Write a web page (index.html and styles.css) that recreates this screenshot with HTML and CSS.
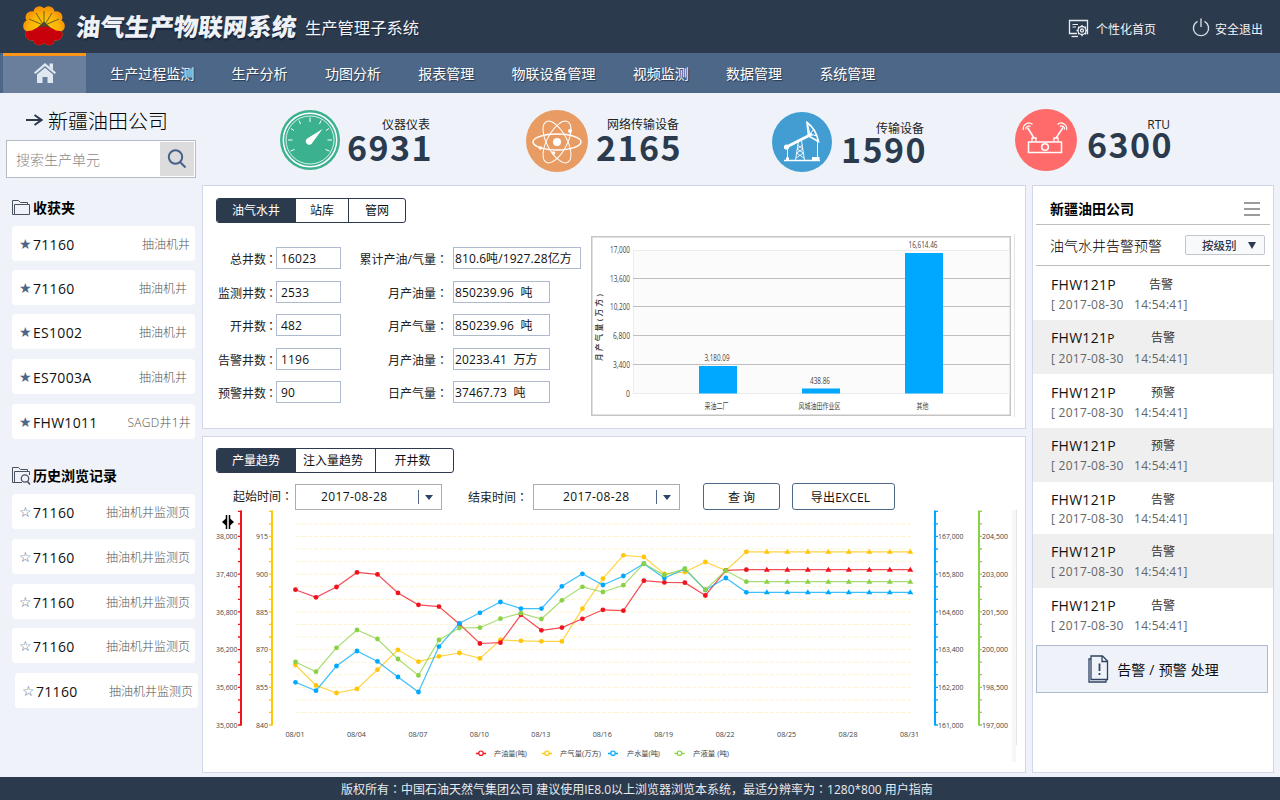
FILE: index.html
```html
<!DOCTYPE html>
<html lang="zh-CN">
  <head>
    <meta charset="UTF-8" />
    <meta name="viewport" content="width=device-width, initial-scale=1.0" />
    <title>油气生产物联网系统</title>
    <link rel="stylesheet" href="styles.css">
  </head>
  <body>
    <header class="header">
      <svg class="logo" width="42" height="40" viewBox="0 0 42 40">
        <defs>
          <radialGradient id="petal" cx="50%" cy="55%" r="60%">
            <stop offset="0" stop-color="#ffd200" />
            <stop offset="0.6" stop-color="#fbb009" />
            <stop offset="1" stop-color="#f08300" />
          </radialGradient>
          <clipPath id="flower">
            <circle cx="21" cy="20" r="15.5" />
            <circle cx="16.4" cy="6.2" r="6" /><circle cx="25.6" cy="6.2" r="6" />
            <circle cx="8.5" cy="11.2" r="6" /><circle cx="33.5" cy="11.2" r="6" />
            <circle cx="6.2" cy="20" r="6" /><circle cx="35.8" cy="20" r="6" />
            <circle cx="8.5" cy="28.5" r="6" /><circle cx="33.5" cy="28.5" r="6" />
            <circle cx="16.4" cy="33.2" r="6" /><circle cx="25.6" cy="33.2" r="6" />
          </clipPath>
        </defs>
        <g clip-path="url(#flower)">
          <rect width="42" height="40" fill="url(#petal)" />
          <path d="M21 19V5M20.500 19L13 7M21.500 19L29 7M20 19L6 13M22 19L36 13" stroke="#5e5a1c" stroke-width="0.9" />
          <path d="M14 22L21 15.500L28 22Z" fill="#4c4a28" />
          <path d="M0 26Q5 24.500 9 24.500Q15 20.500 21 20.500Q27 20.500 33 24.500Q37 24.500 42 26V40H0Z" fill="#c7000b" />
        </g>
      </svg>
      <h1>油气生产物联网系统</h1>
      <h2>生产管理子系统</h2>
      <div class="header-links">
        <a class="link-home">
          <svg width="21" height="19" viewBox="0 0 21 19" fill="none" stroke="#e8ecf1" stroke-width="1.300">
            <path d="M9 14.500H1.500V1.500H19.500V14.500H18.500" />
            <path d="M3.500 17.500H10" />
            <path d="M4.500 5.500H10M4.500 8H8" stroke-width="1" />
            <circle cx="14" cy="11.500" r="4" />
            <circle cx="14" cy="11.500" r="1.500" />
            <path d="M14 6V7.500M14 15.500V17.300M8.500 11.500H10M18 11.500H19.500M17.900 7.700L16.900 8.700M10.100 15.300L11.200 14.300M17.900 15.300L16.900 14.300M10.100 7.700L11.100 8.700" />
          </svg>
          个性化首页
        </a>
        <a class="link-exit">
          <svg width="18" height="19" viewBox="0 0 18 19" fill="none" stroke="#d5dae2" stroke-width="1.400">
            <path d="M5.500 3.300A7.600 7.600 0 1 0 12.500 3.300" />
            <path d="M9 0.500V9" />
          </svg>
          安全退出
        </a>
      </div>
    </header>

    <nav class="nav">
      <a class="nav-home">
        <svg width="22" height="20" viewBox="0 0 22 20" fill="#dfe8f1">
          <path d="M11 0L22 9.500L20.500 11L11 3L1.500 11L0 9.500Z" />
          <path d="M15.500 0.500H19V7L15.500 4Z" />
          <path d="M3 11.500L11 4.800L19 11.500V20H13.500V14H8.500V20H3Z" />
        </svg>
      </a>
      <a>生产过程监测</a>
      <a>生产分析</a>
      <a>功图分析</a>
      <a>报表管理</a>
      <a>物联设备管理</a>
      <a>视频监测</a>
      <a>数据管理</a>
      <a>系统管理</a>
    </nav>

    <div class="page">
      <aside class="sidebar">
        <div class="company">
          <svg width="17" height="12" viewBox="0 0 17 12" fill="none" stroke="#2c3a4d" stroke-width="2">
            <path d="M0 6H15.500M8.500 1L15.500 6L8.500 11" />
          </svg>
          新疆油田公司
        </div>
        <div class="search">
          <span>搜索生产单元</span>
          <button>
            <svg width="20" height="20" viewBox="0 0 20 20" fill="none" stroke="#46618a" stroke-width="2">
              <circle cx="8.500" cy="8" r="6.700" />
              <path d="M13 13L18.500 18.500" />
            </svg>
          </button>
        </div>

        <div class="side-title">
          <svg width="21" height="17" viewBox="0 0 21 17" fill="none" stroke="#4a5260" stroke-width="1">
            <path d="M2.500 15.500H0.500V1.500H6.500L8.500 3.500H15.500V5.500" />
            <path d="M2.500 15.500V5.500H17.500V15.500Z" />
          </svg>
          收获夹
        </div>
        <ul class="side-list favorites">
          <li><i class="star">★</i><b>71160</b><span>抽油机井</span></li>
          <li><i class="star">★</i><b>71160</b><span>抽油机井</span></li>
          <li><i class="star">★</i><b>ES1002</b><span>抽油机井</span></li>
          <li><i class="star">★</i><b>ES7003A</b><span>抽油机井</span></li>
          <li><i class="star">★</i><b>FHW1011</b><span>SAGD井1井</span></li>
        </ul>

        <div class="side-title history-title">
          <svg width="21" height="18" viewBox="0 0 21 18" fill="none" stroke="#4a5260" stroke-width="1">
            <path d="M10 15.500H0.500V0.500H6.500L8.500 2.500H15.500V4.500" />
            <path d="M2.500 15.500V4.500H17.500V8" />
            <circle cx="13" cy="11.500" r="3.700" stroke-width="1.300" />
            <path d="M15.500 14.500L18 17.500" stroke-width="1.500" />
          </svg>
          历史浏览记录
        </div>
        <ul class="side-list history">
          <li><i class="star">☆</i><b>71160</b><span>抽油机井监测页</span></li>
          <li><i class="star">☆</i><b>71160</b><span>抽油机井监测页</span></li>
          <li><i class="star">☆</i><b>71160</b><span>抽油机井监测页</span></li>
          <li><i class="star">☆</i><b>71160</b><span>抽油机井监测页</span></li>
          <li><i class="star">☆</i><b>71160</b><span>抽油机井监测页</span></li>
        </ul>
      </aside>

      <main class="main">
        <section class="stats">
          <div class="stat">
            <svg width="60" height="60" viewBox="0 0 60 60" fill="none" stroke="#fff">
              <circle cx="30" cy="30" r="30" fill="#3bb18f" stroke="none" />
              <circle cx="30" cy="30" r="26.700" stroke-width="1.500" />
              <circle cx="30" cy="30" r="24" stroke-width="0.800" />
              <path d="M30 7.500V12M19 10.500L20.500 14M41 10.500L39.500 14M11 18.500L14 20.500M49 18.500L46 20.500M8 30H12.500M52 30H47.500M10.500 41L14.500 39.500M49.500 41L45.500 39.500" />
              <path d="M42.500 19L32.500 32.500A3.500 3.500 0 1 1 28 28Z" fill="#fff" stroke="none" />
            </svg>
            <div class="stat-text"><span>仪器仪表</span><strong>6931</strong></div>
          </div>
          <div class="stat">
            <svg width="62" height="62" viewBox="0 0 62 62" fill="none" stroke="#fff">
              <circle cx="31" cy="31" r="31" fill="#e89b63" stroke="none" />
              <ellipse cx="31" cy="32" rx="24" ry="8" stroke-width="1.500" />
              <ellipse cx="31" cy="32" rx="23" ry="10" transform="rotate(62 31 32)" />
              <ellipse cx="31" cy="32" rx="23" ry="10" transform="rotate(118 31 32)" />
              <circle cx="31" cy="32" r="4" fill="#fff" stroke="none" />
              <circle cx="44" cy="21" r="2" fill="#fff" stroke="none" />
              <circle cx="14.500" cy="38" r="1.800" fill="#fff" stroke="none" />
              <circle cx="27.500" cy="43" r="1.800" fill="#fff" stroke="none" />
            </svg>
            <div class="stat-text"><span>网络传输设备</span><strong>2165</strong></div>
          </div>
          <div class="stat">
            <svg width="60" height="60" viewBox="0 0 60 60" fill="none" stroke="#fff">
              <circle cx="30" cy="30" r="30" fill="#419dd2" stroke="none" />
              <path d="M12 48.500H48" stroke-width="1.400" />
              <path d="M14.500 35L40 22" stroke-width="3" />
              <circle cx="14.500" cy="35" r="2.600" fill="#fff" stroke="none" />
              <path d="M35 10.500Q44 17 46.500 29.500L36.500 24Z" stroke-width="1.600" />
              <path d="M38 22L42 17M38 22L45 24M38 22L35.500 12" />
              <path d="M26.500 29L23.500 48M29.500 29L32.500 48M25.500 33L31 37L24.500 41L32 46M30.500 33L25 37L31.500 41L24 46" stroke-width="0.900" />
              <path d="M15.500 37V48M45.500 29V46" />
              <path d="M14 45.500H17V48.500H14ZM40 45H47.500V48.500H40Z" fill="#fff" stroke="none" />
            </svg>
            <div class="stat-text"><span>传输设备</span><strong>1590</strong></div>
          </div>
          <div class="stat">
            <svg width="62" height="62" viewBox="0 0 62 62" fill="none" stroke="#fff">
              <circle cx="31" cy="31" r="31" fill="#ff6b6b" stroke="none" />
              <rect x="13.500" y="33" width="33" height="10.500" stroke-width="1.500" />
              <circle cx="30" cy="38" r="3.300" stroke-width="1.600" />
              <path d="M17 32.500V29H21V32.500M39 32.500V29H43V32.500" stroke-width="1.300" />
              <path d="M19 29L12.500 18.500M41 29L48 18.500" stroke-width="1.500" />
              <path d="M8.500 21A5.500 5.500 0 0 1 17.500 15.500M10.800 20.500A3 3 0 0 1 15.500 17.500M51.500 21A5.500 5.500 0 0 0 42.500 15.500M49.500 20.500A3 3 0 0 0 44.800 17.500" stroke-width="1.200" />
            </svg>
            <div class="stat-text"><span>RTU</span><strong>6300</strong></div>
          </div>
        </section>

        <div class="panels">
          <section class="panel wells">
            <div class="tabs">
              <a class="active">油气水井</a><a class="w53">站库</a><a class="w57">管网</a>
            </div>
            <div class="wells-body">
              <div class="fields">
                <label>总井数<em lang="zh-TW">：</em></label><div class="box">16023</div>
                <label>累计产油/气量<em lang="zh-TW">：</em></label><div class="box wide">810.6吨/1927.28亿方</div>
                <label>监测井数<em lang="zh-TW">：</em></label><div class="box">2533</div>
                <label>月产油量<em lang="zh-TW">：</em></label><div class="box">850239.96&nbsp; 吨</div>
                <label>开井数<em lang="zh-TW">：</em></label><div class="box">482</div>
                <label>月产气量<em lang="zh-TW">：</em></label><div class="box">850239.96&nbsp; 吨</div>
                <label>告警井数<em lang="zh-TW">：</em></label><div class="box">1196</div>
                <label>月产油量<em lang="zh-TW">：</em></label><div class="box">20233.41&nbsp; 万方</div>
                <label>预警井数<em lang="zh-TW">：</em></label><div class="box">90</div>
                <label>日产气量<em lang="zh-TW">：</em></label><div class="box">37467.73&nbsp; 吨</div>
              </div>
              <svg id="barChart" class="bar-chart" width="425" height="184" viewBox="591 234 425 184"></svg>
            </div>
          </section>

          <section class="panel trend">
            <div class="tabs">
              <a class="active">产量趋势</a><a class="w81">注入量趋势</a><a class="w78">开井数</a>
            </div>
            <div class="filters">
              <label>起始时间<em lang="zh-TW">：</em></label>
              <div class="select"><span>2017-08-28</span><i></i></div>
              <label class="end-label">结束时间<em lang="zh-TW">：</em></label>
              <div class="select select-end"><span>2017-08-28</span><i></i></div>
              <button class="btn-query">查 询</button>
              <button class="btn-export">导出EXCEL</button>
            </div>
            <svg id="lineChart" class="line-chart" width="822" height="260" viewBox="203 510 822 260"></svg>
          </section>

          <aside class="panel alarms">
            <div class="alarm-head">
              <h3>新疆油田公司</h3>
              <div class="menu"><i></i><i></i><i></i></div>
            </div>
            <div class="alarm-sub">
              <span>油气水井告警预警</span>
              <button>按级别<i></i></button>
            </div>
            <ul class="alarm-list">
              <li><p><b>FHW121P</b><span>告警</span></p><time>[ 2017-08-30 <s></s>14:54:41]</time></li>
              <li><p><b>FHW121<small>P</small></b><span>告警</span></p><time>[ 2017-08-30 <s></s>14:54:41]</time></li>
              <li><p><b>FHW121P</b><span>预警</span></p><time>[ 2017-08-30 <s></s>14:54:41]</time></li>
              <li><p><b>FHW121P</b><span>预警</span></p><time>[ 2017-08-30 <s></s>14:54:41]</time></li>
              <li class="tight"><p><b>FHW121P</b><span>告警</span></p><time>[ 2017-08-30 <s></s>14:54:41]</time></li>
              <li><p><b>FHW121P</b><span>告警</span></p><time>[ 2017-08-30 <s></s>14:54:41]</time></li>
              <li><p><b>FHW121P</b><span>告警</span></p><time>[ 2017-08-30 <s></s>14:54:41]</time></li>
            </ul>
            <button class="handle">
              <svg width="21" height="28" viewBox="0 0 21 28" fill="none" stroke="#2f4463" stroke-width="1.300">
                <path d="M3 1H14.500L19.500 6V24.500H3Z" />
                <path d="M14 1V6.500H19.500" />
                <path d="M3 4H1V27H18V24.500" />
                <path d="M11.500 8.500V16M11.500 18V20" stroke-width="1.800" />
              </svg>
              告警 / 预警 处理
            </button>
          </aside>
        </div>
      </main>
    </div>

    <footer class="footer">版权所有<em lang="zh-TW">：</em>中国石油天然气集团公司 建议使用IE8.0以上浏览器浏览本系统，最适分辨率为<em lang="zh-TW">：</em>1280*800 用户指南</footer>
    <script src="charts.js"></script>
  </body>
</html>
```
FILE: styles.css
```css
* {
  margin: 0;
  padding: 0;
  box-sizing: border-box;
}
body {
  width: 1280px;
  height: 800px;
  overflow: hidden;
  background: #eff3f9;
  color: #111;
  font-family: "Open Sans", "Noto Sans CJK SC", sans-serif;
  font-size: 12px;
}
ul {
  list-style: none;
}
em {
  font-style: normal;
  font-family: "Noto Sans CJK TC", sans-serif;
}
i, b {
  font-style: normal;
  font-weight: normal;
}
button {
  font-family: inherit;
  color: inherit;
}

/* header */
.header {
  height: 53px;
  background: #2c3a4d;
  display: flex;
  align-items: center;
  padding-left: 23px;
  color: #fff;
  white-space: nowrap;
}
.logo {
  margin-bottom: 1px;
}
.header h1 {
  width: 221px;
  margin-left: 11px;
  font-size: 24.5px;
  font-weight: 900;
  line-height: 53px;
  color: #eef2f6;
  transform: skewX(-6deg);
  text-shadow: 1px 2px 1px #16233a;
}
.header h2 {
  margin-left: 8px;
  width: 116px;
  font-size: 16.300px;
  font-weight: 400;
  color: #f2f4f7;
  text-shadow: 1px 1px 1px #16233a;
}
.header-links {
  display: flex;
  margin-left: 647px;
  padding-top: 6px;
}
.header-links a {
  display: flex;
  align-items: center;
  color: #f2f4f7;
}
.link-home {
  width: 124px;
  gap: 7px;
}
.link-exit {
  gap: 5px;
}
.link-exit svg {
  margin-top: -3px;
}
.link-exit,
.link-home {
  height: 20px;
  margin-top: -2px;
}

/* nav */
.nav {
  height: 40px;
  background: #4d6788;
  display: flex;
  gap: 37.300px;
  padding-left: 3px;
  line-height: 41px;
  font-size: 14px;
  color: #fff;
  text-shadow: 1px 1px 1px #2c3a4d;
}
.nav-home {
  width: 83px;
  margin-right: -13px;
  background: #6a7f9c;
  border-top: 3px solid #ff9518;
  display: flex;
  justify-content: center;
  padding-top: 7px;
}

/* sidebar */
.page {
  display: flex;
  height: 684px;
}
.sidebar {
  width: 202px;
}
.company {
  height: 47px;
  padding: 7px 0 0 26px;
  display: flex;
  align-items: center;
  gap: 5px;
  color: #000;
  font-size: 20px;
  font-weight: 300;
}
.search {
  width: 190px;
  height: 38px;
  margin-left: 6px;
  padding: 1px 1px 1px 9px;
  border: 1px solid #b4bcc8;
  background: #fff;
  display: flex;
  align-items: center;
  justify-content: space-between;
  color: #888;
  font-size: 14px;
  font-weight: 300;
}
.search button {
  width: 34px;
  height: 34px;
  border: 0;
  background: #dcdcdc;
  display: flex;
  align-items: center;
  justify-content: center;
}
.side-title {
  height: 48px;
  padding: 10px 0 0 12px;
  display: flex;
  align-items: center;
  color: #000;
  font-size: 14px;
  font-weight: 700;
}
.side-title svg {
  margin-top: 1px;
}
.history-title {
  height: 55px;
  padding-top: 17px;
}
.side-list li {
  width: 183px;
  height: 35px;
  margin: 0 0 9px 12px;
  padding: 0 5px 0 7px;
  border-radius: 4px;
  background: #fff;
  display: flex;
  align-items: center;
}
.side-list .star {
  width: 14px;
  font: 14px/14px "DejaVu Sans", sans-serif;
  color: #4d6788;
}
.side-list b {
  flex: 1;
  padding-top: 1px;
  font-size: 14px;
  letter-spacing: 0.300px;
}
.side-list span {
  color: #555;
  font-weight: 300;
}
.favorites li:nth-child(2),
.favorites li:nth-child(3),
.favorites li:nth-child(4) {
  padding-right: 8px;
}
.favorites li:nth-child(3),
.favorites li:nth-child(4),
.history li:nth-child(1),
.history li:nth-child(2),
.history li:nth-child(4) {
  margin-bottom: 10px;
}
.favorites li:nth-child(5) {
  margin-bottom: 0;
  padding-right: 4px;
}
.favorites li:nth-child(5) span {
  letter-spacing: 0.250px;
}
.history li:nth-child(5) {
  margin-left: 15px;
}

/* stats */
.main {
  flex: 1;
}
.stats {
  height: 92px;
  padding-left: 78px;
  display: grid;
  grid-template-columns: 246px 246px 243px 200px;
}
.stat {
  display: flex;
  gap: 7px;
  padding-top: 17px;
}
.stat:nth-child(2) {
  gap: 8px;
}
.stat:nth-child(3) {
  gap: 9px;
  padding-top: 19px;
}
.stat:nth-child(4) {
  gap: 10px;
  padding-top: 16px;
}
.stat-text {
  width: 85px;
  padding-top: 5px;
  display: flex;
  flex-direction: column;
  color: #222;
}
.stat span {
  align-self: flex-end;
  margin-right: 2px;
  line-height: 20px;
}
.stat strong {
  margin-top: -3px;
  font: 700 34px/30px "Noto Sans CJK SC", sans-serif;
  letter-spacing: 1.400px;
  color: #2c3a4d;
}
.stat:nth-child(3) .stat-text {
  padding-top: 7px;
}
.stat:nth-child(3) strong {
  margin-top: -5px;
}
.stat:nth-child(4) .stat-text {
  padding-top: 6px;
}
.stat:nth-child(4) strong {
  margin-top: -6px;
}

/* panels */
.panels {
  display: grid;
  grid-template-columns: 824px 242px;
  grid-template-rows: 244px 337px;
  gap: 7px 6px;
}
.panel {
  border: 1px solid #d2d6eb;
  background: #fff;
}
.tabs {
  display: flex;
  width: fit-content;
  height: 25px;
  margin: 12px 0 0 13px;
  border: 1px solid #2c3a4d;
  border-radius: 3px;
  line-height: 24px;
  text-align: center;
  overflow: hidden;
}
.tabs a {
  border-left: 1px solid #2c3a4d;
}
.tabs .active {
  width: 78px;
  border: 0;
  background: #2c3a4d;
  color: #fff;
}
.tabs .w53 { width: 53px; }
.tabs .w57 { width: 57px; }
.tabs .w78 { width: 78px; padding-right: 4px; }
.tabs .w81 { width: 80px; padding-right: 5px; }

.wells-body {
  display: flex;
  margin-top: 11px;
}
.fields {
  width: 388px;
  padding-top: 13px;
  display: grid;
  grid-template-columns: 73px 65px 112px 128px;
  grid-auto-rows: 33.500px;
}
.fields label {
  padding-right: 1px;
  line-height: 23px;
  text-align: right;
  color: #222;
  white-space: nowrap;
}
.fields label em {
  display: inline-block;
  width: 9px;
  text-align: left;
  text-indent: -1px;
}
.fields label:nth-child(4n + 3) em {
  width: 16px;
  text-indent: 0;
}
.box {
  height: 22px;
  border: 1px solid #aebace;
  padding-left: 4px;
  line-height: 21px;
  letter-spacing: 0.200px;
  white-space: nowrap;
}
.box:nth-child(4n) {
  width: 97px;
  padding-left: 1px;
  letter-spacing: 0.100px;
}
.box.wide {
  width: 128px;
}

.filters {
  display: flex;
  align-items: center;
  height: 27px;
  margin-top: 10px;
  padding-left: 30px;
  white-space: nowrap;
}
.filters label {
  width: 62px;
  margin-top: -2px;
  color: #222;
}
.filters .end-label {
  width: 65px;
  margin-top: 0;
  margin-left: 26px;
}
.select {
  width: 147px;
  height: 26px;
  border: 1px solid #a9adb3;
  display: flex;
  align-items: center;
}
.select span {
  width: 122px;
  padding-left: 25px;
  letter-spacing: 0.400px;
}
.select-end span {
  padding-left: 29px;
}
.select span + i {
  height: 14px;
  border-left: 1px solid #4d6788;
}
.select i::after {
  content: "";
  display: block;
  margin: 5px 0 0 6px;
  border: 4px solid transparent;
  border-top: 5px solid #2c4468;
}
.filters button {
  height: 27px;
  border: 1px solid #4d6788;
  border-radius: 3px;
  background: #fff;
  font-size: 12px;
}
.btn-query {
  width: 77px;
  margin: 0 12px 0 23px;
}
.btn-export {
  width: 103px;
  padding-right: 6px;
  letter-spacing: 0.200px;
}
.trend .tabs {
  margin-top: 11px;
}
.line-chart {
  display: block;
}
svg text {
  font-family: "Open Sans", "Noto Sans CJK SC", sans-serif;
  fill: #444;
}

/* alarms */
.alarms {
  grid-column: 2;
  grid-row: 1 / 3;
}
.alarm-head,
.alarm-sub {
  display: flex;
  align-items: center;
  justify-content: space-between;
  margin: 0 3px;
  border-bottom: 1px solid #bdbdbd;
}
.alarm-head {
  height: 39px;
  padding: 5px 10px 0 14px;
}
.alarm-head h3 {
  color: #000;
  font-size: 14px;
}
.menu i {
  display: block;
  width: 16px;
  height: 2px;
  margin-top: 3px;
  background: #9b9b9b;
}
.menu i + i {
  margin-top: 4px;
}
.alarm-sub {
  height: 41px;
  padding: 0 5px 0 14px;
  color: #000;
  font-size: 14px;
}
.alarm-sub span {
  font-weight: 300;
}
.alarm-sub button {
  width: 80px;
  height: 20px;
  border: 1px solid #c3c7cd;
  border-radius: 2px;
  background: #f8f9fb;
  color: #2c3a4d;
  font-size: 11.500px;
  font-weight: 500;
  display: flex;
  align-items: center;
  gap: 11px;
  padding-left: 16px;
}
.alarm-sub button i {
  border: 4px solid transparent;
  border-top: 7px solid #2c3a4d;
  border-bottom: 0;
}
.alarm-list li {
  height: 54px;
  padding: 8px 0 0 18px;
  line-height: 20px;
}
.alarm-list li:nth-child(odd) {
  padding-top: 9px;
}
.alarm-list li:nth-child(even) {
  background: #efefef;
}
.alarm-list .tight {
  height: 52px;
}
.alarm-list li.tight {
  padding-top: 8px;
}
.alarm-list .tight time {
  margin-top: -1px;
}
.alarm-list li:nth-child(7) {
  height: 57px;
  padding-top: 8px;
}
.alarm-list p {
  display: flex;
}
.alarm-list b {
  width: 100px;
  font-size: 14px;
  letter-spacing: 0.300px;
}
.alarm-list li:first-child b {
  width: 98px;
}
.alarm-list small {
  font-size: 12px;
}
.alarm-list p span {
  color: #333;
}
.alarm-list time {
  display: block;
  color: #666;
  letter-spacing: 0.250px;
}
.alarm-list s {
  display: inline-block;
  width: 7px;
}
.handle {
  width: 232px;
  height: 48px;
  margin-left: 3px;
  border: 1px solid #adbbd0;
  background: #eff3f9;
  display: flex;
  align-items: center;
  justify-content: center;
  gap: 8px;
  padding-left: 3px;
  font-size: 14px;
  word-spacing: 0.500px;
}

.footer {
  height: 23px;
  background: #2c3a4d;
  color: #e8ebef;
  line-height: 23px;
  padding-left: 341px;
  white-space: nowrap;
}
```
FILE: charts.js
```js
const NS = 'http://www.w3.org/2000/svg';

function add(svg, tag, attrs, content) {
  const el = document.createElementNS(NS, tag);
  for (const key in attrs) el.setAttribute(key, attrs[key]);
  if (content) el.textContent = content;
  svg.appendChild(el);
  return el;
}

// text squeezed to a fixed width
function label(svg, x, y, width, content, anchor, size) {
  add(svg, 'text', {
    x: x, y: y, 'font-size': size || 7.5, 'text-anchor': anchor || 'middle',
    textLength: width, lengthAdjust: 'spacingAndGlyphs'
  }, content);
}

function drawBars() {
  const svg = document.getElementById('barChart');
  add(svg, 'rect', { x: 591.75, y: 236.75, width: 418.5, height: 178.5, fill: '#fff', stroke: '#c4c4c4', 'stroke-width': 1.5 });
  add(svg, 'path', { d: 'M1014.5 234V417', stroke: '#e4e4e4' });
  add(svg, 'rect', { x: 633.5, y: 250.5, width: 376, height: 143, fill: '#fbfbfb', stroke: '#ececec' });
  [278.5, 306.5, 335.5, 364.5].forEach(y => add(svg, 'path', { d: `M633 ${y}H1010`, stroke: '#c0c0c0' }));
  ['17,000', '13,600', '10,200', '6,800', '3,400', '0'].forEach((t, i) => {
    label(svg, 630, 253 + i * 28.7, [20, 20, 20, 17, 17, 4][i], t, 'end', 8.5);
  });
  const bars = [
    [718, 366, '3,180.09', 25, '采油二厂', 24],
    [821, 388.5, '438.86', 20, '风城油田作业区', 42],
    [924, 253, '16,614.46', 29, '其他', 12]
  ];
  bars.forEach(b => {
    add(svg, 'rect', { x: b[0] - 19, y: b[1], width: 38, height: 393.5 - b[1], fill: '#00a9ff' });
    label(svg, b[0] - 1, b[1] - 5, b[3], b[2], 'middle', 8.5);
    label(svg, b[0] - 1.5, 409, b[5], b[4], 'middle', 8.5);
  });
  add(svg, 'text', {
    transform: 'translate(602 361) rotate(-90)', 'font-size': 7.5, 'font-weight': 700,
    textLength: 67, lengthAdjust: 'spacing'
  }, '月产气量(万方)');
}

const series = [
  { color: '#ffc60a', name: '产气量(万方)', data: [665, 685.4, 693, 688.9, 669.7, 649.8, 661.7, 656.3, 653, 658.4, 640, 640.8, 641.3, 641.4, 608.7, 578.7, 555.3, 557, 574, 572, 562, 570.5, 551.8] },
  { color: '#f0121d', name: '产油量(吨)', data: [589.7, 597.3, 587, 572.4, 574.4, 592.9, 604.8, 606.6, 624, 643.5, 642.7, 614.8, 630.3, 627.6, 618.8, 609.8, 610.7, 580.7, 582.4, 582.7, 595.5, 570.3, 569.7] },
  { color: '#00a9ff', name: '产水量(吨)', data: [682.3, 690.7, 666, 651, 661.4, 677, 692, 646.6, 623.3, 612.8, 602, 608.6, 608.6, 586.3, 573.8, 585, 576, 563.7, 578, 569, 590, 578, 592.3] },
  { color: '#8bd145', name: '产液量 (吨)', data: [662, 671.7, 647.8, 630, 639, 659, 675.4, 640, 628, 627.7, 618.7, 613.2, 619, 600.3, 586.8, 592, 585.2, 563.7, 575, 568.7, 589.7, 570.5, 581.7] }
];

function drawAxis(svg, x, side, color, labels, textX, width) {
  const ticks = [];
  for (let i = 0; i < 18; i++) ticks.push(`M${x} ${725 - i * 12.57}h${3 * side}`);
  add(svg, 'path', { d: `M${x} 510.5V725.5`, stroke: color, 'stroke-width': 2 });
  add(svg, 'path', { d: ticks.join(''), stroke: color, 'stroke-width': 1.3 });
  labels.forEach((t, i) => label(svg, textX, 539 + i * 37.75, width, t, side < 0 ? 'end' : 'start'));
}

function drawLines() {
  const svg = document.getElementById('lineChart');
  for (let i = 1; i < 17; i++) {
    add(svg, 'path', { d: `M296 ${725 - i * 12.57}H911`, stroke: '#fff4cf', 'stroke-dasharray': '4 2' });
  }
  drawAxis(svg, 241, -1, '#f0121d', ['38,000', '37,400', '36,800', '36,200', '35,600', '35,000'], 237.5, 21.5);
  drawAxis(svg, 272, -1, '#ffc60a', ['915', '900', '885', '870', '855', '840'], 268, 12);
  drawAxis(svg, 935, 1, '#00a9ff', ['167,000', '165,800', '164,600', '163,400', '162,200', '161,000'], 938, 25.5);
  drawAxis(svg, 979, 1, '#8bd145', ['204,500', '203,000', '201,500', '200,000', '198,500', '197,000'], 982, 26);
  for (let i = 0; i < 11; i++) {
    const day = 1 + i * 3;
    label(svg, 295 + i * 61.45, 737, 19, '08/' + (day < 10 ? '0' + day : day));
  }

  series.forEach(s => {
    const data = s.data.slice();
    while (data.length < 31) data.push(data[22]);
    const pts = data.map((y, i) => [295.5 + i * 20.493, y]);
    add(svg, 'polyline', { points: pts.join(' '), fill: 'none', stroke: s.color, 'stroke-width': 1.2, 'stroke-opacity': 0.75 });
    pts.forEach((p, i) => {
      if (i > 22) add(svg, 'path', { d: `M${p[0]} ${p[1] - 3}l3 5h-6Z`, fill: s.color });
      else add(svg, 'circle', { cx: p[0], cy: p[1], r: 2.4, fill: s.color });
    });
  });

  const legend = [[1, 481, 494, 33], [0, 547, 560, 41], [2, 613, 627, 33], [3, 679.5, 693, 36]];
  legend.forEach(l => {
    const s = series[l[0]];
    add(svg, 'path', { d: `M${l[1] - 5} 753.5h10`, stroke: s.color, 'stroke-width': 1.5 });
    add(svg, 'circle', { cx: l[1], cy: 753.2, r: 2.2, fill: '#fff', stroke: s.color, 'stroke-width': 1.2 });
    label(svg, l[2], 755.5, l[3], s.name, 'start', 7);
  });

  // scroll track and drag handle
  add(svg, 'rect', { x: 1012, y: 510, width: 4, height: 252, fill: '#f7f7f7' });
  add(svg, 'path', { d: 'M1016.5 510V745', stroke: '#e4e4e4' });
  add(svg, 'path', { d: 'M226.5 515v14M229.5 515v14', stroke: '#000', 'stroke-width': 1.5 });
  add(svg, 'path', { d: 'M222 522l4.5-4v8ZM234 522l-4.5-4v8Z', fill: '#000' });
}

drawBars();
drawLines();
```
